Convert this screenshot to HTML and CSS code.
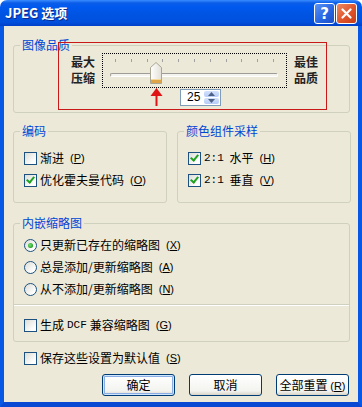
FILE: index.html
```html
<!DOCTYPE html>
<html lang="zh-CN">
<head>
  <meta charset="UTF-8">
  <title>JPEG 选项</title>
  <link rel="stylesheet" href="styles.css">
</head>
<body>

  <div class="window">
    <div class="titlebar">
      <span class="title">JPEG 选项</span>
      <div class="caption-btns">
        <span class="cbtn help">?</span>
        <span class="cbtn close">
          <svg width="11" height="11" viewBox="0 0 11 11">
            <path d="M1.5 1.5 L9.5 9.5 M9.5 1.5 L1.5 9.5" stroke="#fff" stroke-width="2.2" stroke-linecap="round"/>
          </svg>
        </span>
      </div>
    </div>

    <div class="client">
      <fieldset class="group">
        <legend>图像品质</legend>
        <div class="slider-row">
          <div class="slider-label">最大<br>压缩</div>
          <div class="slider">
            <div class="ticks">
              <i></i><i></i><i></i><i></i><i></i><i></i><i></i><i></i><i></i><i></i><i></i>
            </div>
            <div class="track"></div>
            <svg class="thumb" width="12" height="22" viewBox="0 0 12 22">
              <defs>
                <linearGradient id="thumbFill" x1="0" y1="0" x2="1" y2="0">
                  <stop offset="0" stop-color="#ffffff"/>
                  <stop offset="1" stop-color="#e2e0d6"/>
                </linearGradient>
              </defs>
              <path d="M0.5 5.5 L6 0.5 L11.5 5.5 L11.5 21.5 L0.5 21.5 Z" fill="url(#thumbFill)" stroke="#a9a794"/>
              <rect x="1" y="18" width="10" height="3" fill="#e0a448"/>
              <rect x="1" y="17" width="10" height="1" fill="#f6d89a"/>
            </svg>
          </div>
          <div class="slider-label">最佳<br>品质</div>
        </div>
        <div class="spin-row">
          <div class="spin">
            <span class="spin-value">25</span>
            <span class="spin-btns">
              <span class="spin-btn">
                <svg width="7" height="4" viewBox="0 0 7 4"><path d="M0 4 L3.5 0 L7 4 Z" fill="#4d6185"/></svg>
              </span>
              <span class="spin-btn">
                <svg width="7" height="4" viewBox="0 0 7 4"><path d="M0 0 L3.5 4 L7 0 Z" fill="#4d6185"/></svg>
              </span>
            </span>
          </div>
        </div>
      </fieldset>

      <div class="group-pair">
        <fieldset class="group">
          <legend>编码</legend>
          <div class="option"><span class="checkbox"></span>渐进 <span class="key">(<u>P</u>)</span></div>
          <div class="option"><span class="checkbox checked"></span>优化霍夫曼代码 <span class="key">(<u>O</u>)</span></div>
        </fieldset>
        <fieldset class="group">
          <legend>颜色组件采样</legend>
          <div class="option"><span class="checkbox checked"></span><span class="mono">2:1</span>&nbsp;水平 <span class="key">(<u>H</u>)</span></div>
          <div class="option"><span class="checkbox checked"></span><span class="mono">2:1</span>&nbsp;垂直 <span class="key">(<u>V</u>)</span></div>
        </fieldset>
      </div>

      <fieldset class="group thumbs">
        <legend>内嵌缩略图</legend>
        <div class="option"><span class="radio checked"></span>只更新已存在的缩略图 <span class="key">(<u>X</u>)</span></div>
        <div class="option"><span class="radio"></span>总是添加/更新缩略图 <span class="key">(<u>A</u>)</span></div>
        <div class="option"><span class="radio"></span>从不添加/更新缩略图 <span class="key">(<u>N</u>)</span></div>
        <div class="separator"></div>
        <div class="option dcf"><span class="checkbox"></span>生成 <span class="mono">DCF</span> 兼容缩略图 <span class="key">(<u>G</u>)</span></div>
      </fieldset>

      <div class="option save"><span class="checkbox"></span>保存这些设置为默认值 <span class="key">(<u>S</u>)</span></div>

      <div class="buttons">
        <button class="btn default">确定</button>
        <button class="btn">取消</button>
        <button class="btn">全部重置 <span class="key">(<u>R</u>)</span></button>
      </div>

      <!-- red annotation drawn over the screenshot -->
      <div class="annot-box"></div>
      <svg class="annot-arrow" width="13" height="18" viewBox="0 0 13 18">
        <path d="M6.5 0 L0.5 8 L12.5 8 Z" fill="#e01414"/>
        <rect x="5.5" y="8" width="2" height="10" fill="#e01414"/>
      </svg>
    </div>
  </div>

</body>
</html>
```

FILE: styles.css
```css
body {
  margin: 0;
  font-family: "Noto Sans CJK SC", "Noto Sans", sans-serif;
  font-size: 12px;
  background-color: #ffffff;
}
.window {
  width: 362px;
  height: 407px;
  display: flex;
  flex-direction: column;
}
.titlebar {
  height: 26px;
  flex: none;
  display: flex;
  align-items: center;
  justify-content: space-between;
  border-radius: 7px 7px 0 0;
  background: linear-gradient(#3b8cff 0, #0a5de8 3px, #0058ee 7px, #0054e3 55%, #0050dc 85%, #0040c8 100%);
}
.title {
  margin-left: 5px;
  color: #ffffff;
  font-weight: bold;
  font-size: 13px;
  line-height: 16px;
  text-shadow: 1px 1px 0 #0b2a8a;
}
.caption-btns {
  display: flex;
  gap: 1px;
  margin-right: 5px;
  margin-top: 1px;
}
.cbtn {
  width: 19px;
  height: 19px;
  border: 1px solid #ffffff;
  border-radius: 3px;
  display: flex;
  align-items: center;
  justify-content: center;
  color: #ffffff;
}
.help {
  background: linear-gradient(135deg, #5b93f5, #2563e0 60%, #1d4fc6);
  font-family: "DejaVu Sans", sans-serif;
  font-weight: bold;
  font-size: 15px;
}
.close {
  background: linear-gradient(135deg, #ef8a62, #e0542a 55%, #c63d17);
}
.client {
  position: relative;
  flex: 1;
  background-color: #ece9d8;
  border-left: 4px solid #0858e6;
  border-right: 4px solid #0858e6;
  border-bottom: 5px solid #0848d2;
  padding: 0 8px 0 9px;
}
.group {
  margin: 11px 0 0 0;
  padding: 0;
  border: 1px solid #d0d0bf;
  border-radius: 3px;
  min-width: 0;
}
.group legend {
  margin-left: 6px;
  padding: 0 2px;
  color: #0046d5;
  line-height: 16px;
}
.slider-row {
  display: flex;
  align-items: flex-start;
  padding-left: 57px;
  gap: 7px;
}
.slider-label {
  width: 24px;
  margin-top: 1px;
  font-size: 12px;
  line-height: 16px;
  font-weight: bold;
  color: #222222;
}
.slider {
  position: relative;
  width: 183px;
  height: 33px;
  border: 1px dotted #000000;
}
.ticks {
  display: flex;
  justify-content: space-between;
  margin: 5px 12px 0 12px;
}
.ticks i {
  width: 1px;
  height: 3px;
  background-color: #a0a0a0;
}
.track {
  margin: 11px 8px 0 7px;
  height: 2px;
  border: 1px solid #9d9c99;
  border-bottom-color: #ffffff;
  border-right-color: #ffffff;
  border-radius: 2px;
  background-color: #f4f3ee;
}
.thumb {
  position: absolute;
  left: 47px;
  top: 8px;
}
.spin-row {
  margin: 1px 0 6px 166px;
}
.spin {
  width: 39px;
  height: 15px;
  border: 1px solid #7f9db9;
  background-color: #ffffff;
  display: flex;
  justify-content: space-between;
}
.spin-value {
  margin-left: 6px;
  font-family: "Liberation Sans", sans-serif;
  font-size: 12px;
  line-height: 15px;
}
.spin-btns {
  width: 15px;
  margin: 1px;
  display: flex;
  flex-direction: column;
  gap: 1px;
}
.spin-btn {
  flex: 1;
  display: flex;
  align-items: center;
  justify-content: center;
  border-radius: 2px;
  background: linear-gradient(#d4e1fb, #b6cbf8);
}
.group-pair {
  display: flex;
  gap: 10px;
}
.group-pair .group {
  flex: none;
  margin-top: 10px;
  padding: 8px 0 11px 0;
}
.group-pair .group:first-child {
  width: 152px;
}
.group-pair .group:last-child {
  width: 172px;
}
.option {
  display: flex;
  align-items: center;
  height: 22px;
  padding-left: 10px;
  gap: 3px;
  color: #000000;
  line-height: 16px;
  white-space: nowrap;
}
.key {
  margin-left: 3px;
  font-family: "Liberation Sans", sans-serif;
  font-size: 11px;
}
.mono {
  font-family: "Liberation Mono", monospace;
  font-size: 11px;
}
.checkbox {
  width: 11px;
  height: 11px;
  border: 1px solid #1c5180;
  background: linear-gradient(135deg, #dcdcd7, #ffffff 80%);
  display: flex;
  align-items: center;
  justify-content: center;
}
.checkbox.checked::after {
  content: "";
  width: 3px;
  height: 6px;
  margin-top: -2px;
  border: solid #21a121;
  border-width: 0 2px 2px 0;
  transform: rotate(40deg);
}
.radio {
  width: 11px;
  height: 11px;
  border: 1px solid #1c5180;
  border-radius: 50%;
  background: linear-gradient(135deg, #dcdcd7, #ffffff 80%);
  display: flex;
  align-items: center;
  justify-content: center;
}
.radio.checked::after {
  content: "";
  width: 5px;
  height: 5px;
  border-radius: 50%;
  background: radial-gradient(circle at 40% 40%, #7be07b, #21a121 70%);
}
.thumbs {
  margin-top: 12px;
  padding: 3px 0 5px 0;
}
.separator {
  margin-top: 4px;
  height: 1px;
  background-color: #d0d0bf;
  border-bottom: 1px solid #ffffff;
}
.dcf {
  margin-top: 8px;
}
.save {
  margin-top: 5px;
  padding-left: 11px;
}
.buttons {
  display: flex;
  justify-content: flex-end;
  gap: 14px;
  margin-top: 5px;
  padding-right: 1px;
}
.btn {
  width: 73px;
  height: 22px;
  padding: 0;
  font-family: "Noto Sans CJK SC", sans-serif;
  font-size: 12px;
  line-height: 16px;
  color: #000000;
  border: 1px solid #003c74;
  border-radius: 3px;
  background: linear-gradient(#ffffff, #f3f3ef 80%, #d8d4c8);
}
.btn .key {
  margin-left: 0;
}
.btn.default {
  box-shadow: inset 0 0 0 1px #cee7ff, inset 0 0 0 2px #89ade4;
}
.annot-box {
  position: absolute;
  left: 54px;
  top: 16px;
  width: 267px;
  height: 66px;
  border: 1px solid #c81818;
}
.annot-arrow {
  position: absolute;
  left: 146px;
  top: 62px;
}
```
